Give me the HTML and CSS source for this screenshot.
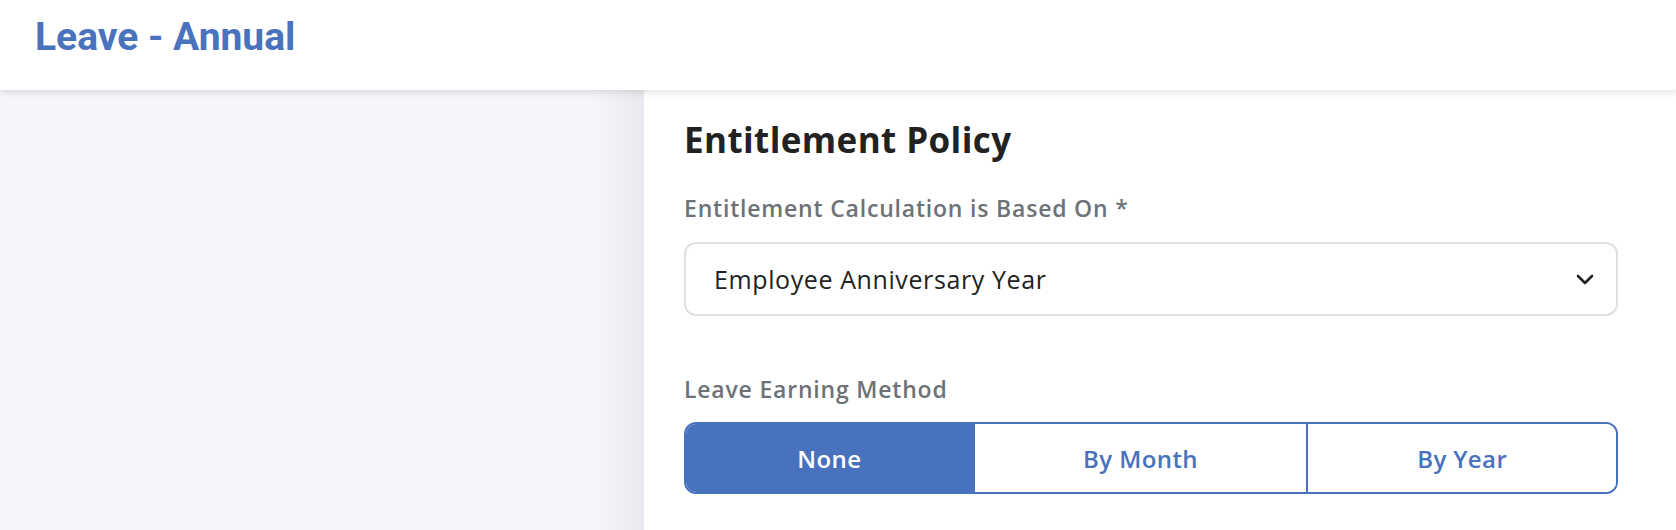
FILE: index.html
```html
<!DOCTYPE html>
<html lang="en">
<head>
<meta charset="utf-8">
<title>Leave - Annual</title>
<link rel="stylesheet" href="styles.css">
</head>
<body>
<header class="topbar">
  <h1 class="page-title">Leave - Annual</h1>
</header>
<main class="layout">
  <aside class="side"></aside>
  <section class="panel">
    <h2 class="section-title">Entitlement Policy</h2>
    <label class="field-label">Entitlement Calculation is Based On *</label>
    <div class="select">
      <span class="select-value">Employee Anniversary Year</span>
      <svg class="chevron" width="18" height="11" viewBox="0 0 18 11" aria-hidden="true"><path d="M2 2 L9 9 L16 2" fill="none" stroke="#222" stroke-width="2.6" stroke-linecap="round" stroke-linejoin="round"/></svg>
    </div>
    <label class="field-label second">Leave Earning Method</label>
    <div class="segmented">
      <button class="seg active">None</button>
      <button class="seg">By Month</button>
      <button class="seg">By Year</button>
    </div>
  </section>
</main>
</body>
</html>
```
FILE: styles.css
```css
* { box-sizing: border-box; }
html, body { margin: 0; padding: 0; }
body {
  width: 1676px;
  height: 530px;
  overflow: hidden;
  background: #ffffff;
  font-family: "Open Sans", Lato, sans-serif;
}
.topbar {
  position: relative;
  z-index: 2;
  height: 90px;
  background: #ffffff;
  padding: 17px 0 0 35px;
  box-shadow: 0 2px 7px rgba(0, 0, 0, 0.13);
}
.page-title {
  margin: 0;
  font-family: Roboto, "Liberation Sans", sans-serif;
  font-weight: 700;
  font-size: 39px;
  line-height: 40px;
  color: #4a72bd;
}
.layout {
  display: flex;
  height: 440px;
}
.side {
  width: 644px;
  flex: none;
  background: linear-gradient(to right, #f5f6fa 0, #f5f6fa calc(100% - 50px), #e8e9ee 100%);
}
.panel {
  flex: 1;
  background: #ffffff;
  padding: 30px 58px 0 40px;
  display: flex;
  flex-direction: column;
}
.section-title {
  margin: 0;
  font-size: 35px;
  line-height: 40px;
  font-weight: 700;
  letter-spacing: 0.4px;
  color: #222222;
}
.field-label {
  display: block;
  margin-top: 35px;
  font-size: 23px;
  line-height: 26px;
  font-weight: 600;
  letter-spacing: 0.8px;
  color: #6d7277;
}
.field-label.second { margin-top: 60px; }
.select {
  margin-top: 21px;
  height: 74px;
  border: 2.5px solid #dce1e4;
  border-radius: 12px;
  display: flex;
  align-items: center;
  justify-content: space-between;
  padding: 0 22px 0 28px;
}
.select-value {
  font-size: 25px;
  letter-spacing: 0.6px;
  color: #222222;
}
.chevron { display: block; }
.segmented {
  margin-top: 20px;
  display: grid;
  grid-template-columns: 288fr 335fr 311fr;
  height: 72px;
  border: 2px solid #4872bd;
  border-radius: 12px;
  overflow: hidden;
}
.seg {
  margin: 0;
  border: none;
  border-left: 2px solid #4872bd;
  background: #ffffff;
  color: #4872bd;
  font-family: "Open Sans", Lato, sans-serif;
  font-size: 24px;
  font-weight: 600;
  letter-spacing: 0.4px;
  padding: 0;
}
.seg:first-child { border-left: none; }
.seg.active {
  background: #4872bd;
  color: #ffffff;
}
```
